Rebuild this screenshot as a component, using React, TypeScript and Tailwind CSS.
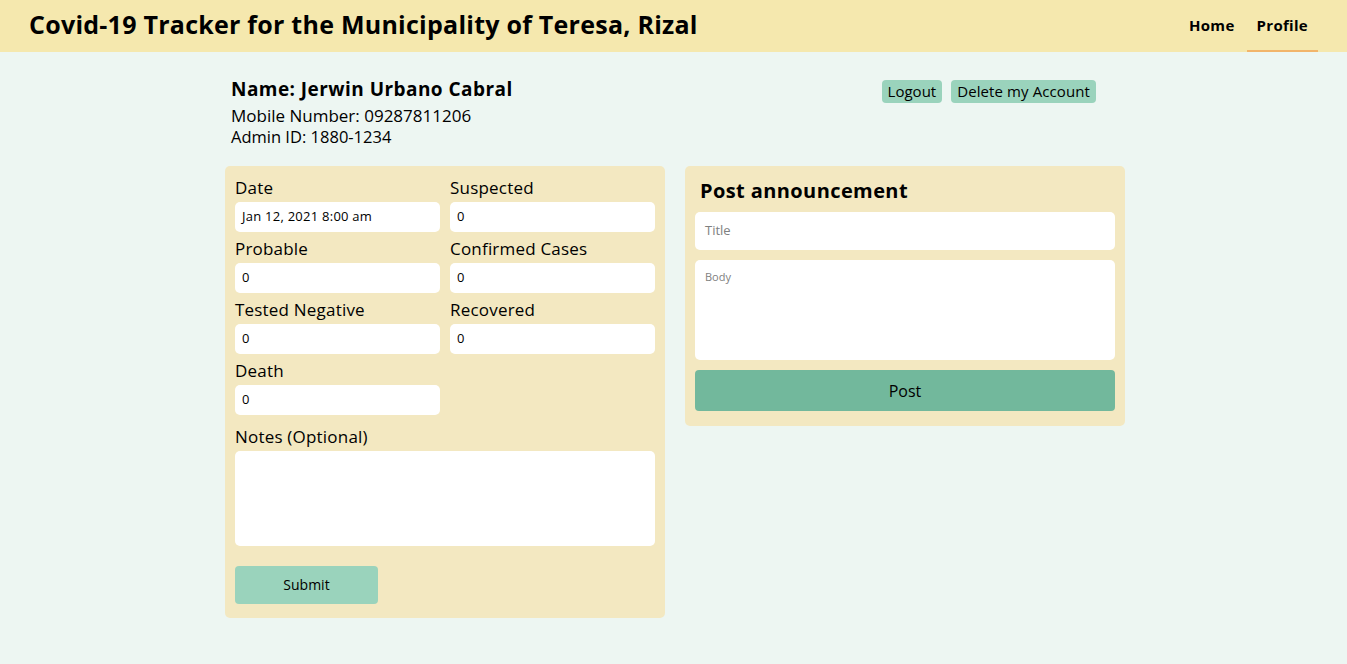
import React from "react";

const font = { fontFamily: '"Open Sans", "Liberation Sans", sans-serif' };

function Field({ label, value }: { label: string; value: string }) {
  return (
    <div className="flex flex-col">
      <label className="text-[17px] leading-[22px] tracking-[0.2px] mb-[3px] text-black">{label}</label>
      <div className="h-[30px] rounded-[5px] bg-white flex items-center pl-[7px] text-[13px] tracking-[0.25px] text-black">{value}</div>
    </div>
  );
}

export default function App() {
  return (
    <div className="min-h-[664px] bg-[#edf6f2] text-black" style={font}>
      <header className="h-[52px] bg-[#f5e8ae] flex items-center justify-between pl-[29px] pr-[29px]">
        <h1 className="text-[25px] font-bold tracking-[0.25px] -mt-[2px]">Covid-19 Tracker for the Municipality of Teresa, Rizal</h1>
        <nav className="flex h-full items-stretch text-[15px] font-bold tracking-[0.3px]">
          <a className="flex items-center px-[10px] border-b-2 border-transparent">Home</a>
          <a className="flex items-center px-[10px] ml-[2px] border-b-2 border-[#f2b56b]">Profile</a>
        </nav>
      </header>

      <main className="w-[900px] ml-[225px] pt-[27px]">
        <div className="flex justify-between pl-[6px] pr-[29px]">
          <div>
            <div className="text-[19px] leading-[20px] font-bold tracking-[0.45px]">Name: Jerwin Urbano Cabral</div>
            <div className="text-[17px] leading-[21px] mt-[6px]">Mobile Number: 09287811206</div>
            <div className="text-[16.5px] leading-[21px]">Admin ID: 1880-1234</div>
          </div>
          <div className="flex gap-[9px] items-start pt-[1px]">
            <button className="h-[23px] px-[6px] rounded-[4px] bg-[#9ad3bc] text-[15px] leading-[23px]">Logout</button>
            <button className="h-[23px] px-[6px] rounded-[4px] bg-[#9ad3bc] text-[15px] leading-[23px] tracking-[0.1px]">Delete my Account</button>
          </div>
        </div>

        <div className="flex gap-[20px] mt-[19px] items-start">
          <div className="w-[440px] bg-[#f3e8c1] rounded-[5px] px-[10px] pt-[11px] pb-[14px]">
            <div className="grid grid-cols-2 gap-x-[10px] gap-y-[6px]">
              <Field label="Date" value="Jan 12, 2021 8:00 am" />
              <Field label="Suspected" value="0" />
              <Field label="Probable" value="0" />
              <Field label="Confirmed Cases" value="0" />
              <Field label="Tested Negative" value="0" />
              <Field label="Recovered" value="0" />
              <Field label="Death" value="0" />
            </div>
            <div className="mt-[11px] mb-[3px] text-[17px] leading-[22px] tracking-[0.2px]">Notes (Optional)</div>
            <div className="h-[95px] bg-white rounded-[5px]"></div>
            <button className="mt-[20px] w-[143px] h-[38px] rounded-[4px] bg-[#9ad3bc] text-[14px] leading-[36px]">Submit</button>
          </div>

          <div className="w-[440px] bg-[#f3e8c1] rounded-[5px] px-[10px] pt-[12px] pb-[15px]">
            <h2 className="text-[20px] leading-[26px] font-bold tracking-[0.4px] pl-[5px]">Post announcement</h2>
            <div className="mt-[8px] h-[38px] bg-white rounded-[5px] flex items-center pl-[10px] text-[13px] text-[#808080]">Title</div>
            <div className="mt-[10px] h-[100px] bg-white rounded-[5px] pl-[10px] pt-[9px] text-[11px] text-[#808080]">Body</div>
            <button className="mt-[10px] w-full h-[41px] rounded-[4px] bg-[#72b89c] text-[16px]">Post</button>
          </div>
        </div>
      </main>
    </div>
  );
}
